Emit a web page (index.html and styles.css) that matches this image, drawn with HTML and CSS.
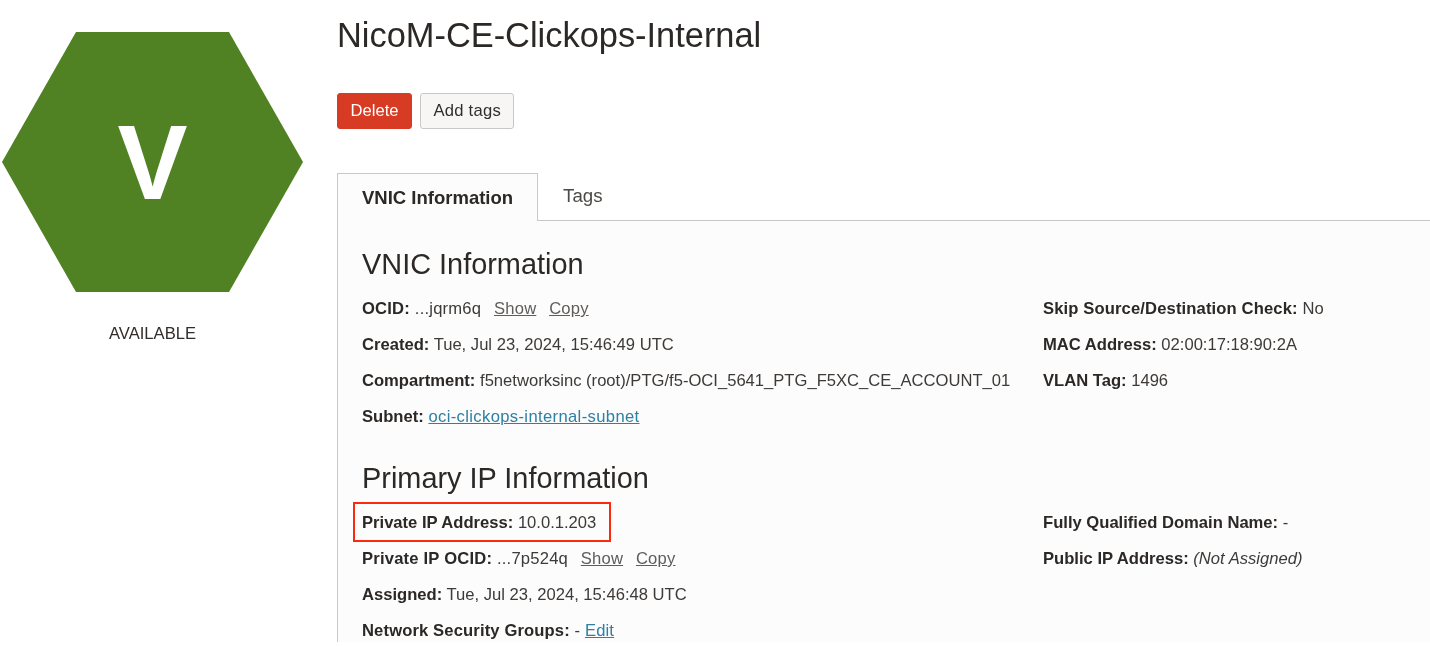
FILE: index.html
```html
<!DOCTYPE html>
<html lang="en">
<head>
<meta charset="utf-8">
<title>NicoM-CE-Clickops-Internal</title>
<link rel="stylesheet" href="styles.css">
</head>
<body>
<div class="page">
  <aside class="status">
    <div class="hex">
      <svg class="hex-shape" width="301" height="260" viewBox="0 0 301 260"><polygon points="0,130 74,0 227,0 301,130 227,260 74,260" fill="#508123"/></svg>
      <span class="hex-letter">V</span>
    </div>
    <div class="status-label">AVAILABLE</div>
  </aside>
  <main class="content">
    <h1 class="title">NicoM-CE-Clickops-Internal</h1>
    <div class="actions">
      <button class="btn btn-danger">Delete</button>
      <button class="btn btn-default">Add tags</button>
    </div>
    <nav class="tabs">
      <div class="tab tab-active">VNIC Information</div>
      <div class="tab tab-plain">Tags</div>
      <div class="tab-rest"></div>
    </nav>
    <section class="panel">
      <h2 class="heading">VNIC Information</h2>
      <div class="cols">
        <div class="col-left">
          <div class="row row-wide"><b>OCID:</b> ...jqrm6q <a class="action">Show</a> <a class="action">Copy</a></div>
          <div class="row"><b>Created:</b> Tue, Jul 23, 2024, 15:46:49 UTC</div>
          <div class="row"><b>Compartment:</b> f5networksinc (root)/PTG/f5-OCI_5641_PTG_F5XC_CE_ACCOUNT_01</div>
          <div class="row"><b>Subnet:</b> <a class="link link-long">oci-clickops-internal-subnet</a></div>
        </div>
        <div class="col-right">
          <div class="row row-loose"><b>Skip Source/Destination Check:</b> No</div>
          <div class="row"><b>MAC Address:</b> 02:00:17:18:90:2A</div>
          <div class="row"><b>VLAN Tag:</b> 1496</div>
        </div>
      </div>
      <h2 class="heading heading-second">Primary IP Information</h2>
      <div class="cols">
        <div class="col-left">
          <div class="row"><span class="mark"><b>Private IP Address:</b> 10.0.1.203</span></div>
          <div class="row row-wide"><b>Private IP OCID:</b> ...7p524q <a class="action">Show</a> <a class="action">Copy</a></div>
          <div class="row"><b>Assigned:</b> Tue, Jul 23, 2024, 15:46:48 UTC</div>
          <div class="row row-loose"><b>Network Security Groups:</b> - <a class="link">Edit</a></div>
        </div>
        <div class="col-right">
          <div class="row"><b>Fully Qualified Domain Name:</b> -</div>
          <div class="row"><b>Public IP Address:</b> <i>(Not Assigned)</i></div>
        </div>
      </div>
    </section>
  </main>
</div>
</body>
</html>
```
FILE: styles.css
```css
* { box-sizing: border-box; }
html, body { margin: 0; height: 100%; background: #fff; overflow: hidden; }
body { font-family: "Liberation Sans", Arial, sans-serif; color: #312d2a; font-size: 16.6px; }
.page { display: flex; height: 647px; filter: blur(0.4px); }
.status { width: 337px; flex: none; padding: 32px 0 0 2px; }
.hex { position: relative; width: 301px; height: 260px; }
.hex-shape { display: block; }
.hex-letter {
  position: absolute; inset: 0; display: flex; align-items: center; justify-content: center;
  color: #fff; font-weight: 700; font-size: 105px; line-height: 1;
}
.status-label { width: 301px; margin-top: 32px; text-align: center; font-size: 16.6px; line-height: 20px; color: #312d2a; }
.content { flex: 1; min-width: 0; }
.title { margin: 16px 0 0; font-weight: 400; font-size: 34.4px; line-height: 38px; color: #2b2826; }
.actions { display: flex; gap: 8px; margin-top: 39px; }
.btn {
  height: 36px; padding: 0 12.5px; font: 16.6px/20px "Liberation Sans", Arial, sans-serif; color: #312d2a;
  background: #f7f6f5; border: 1px solid #c9c8c6; border-radius: 3px;
}
.btn-danger { background: #d73b24; border-color: #d73b24; color: #fff; }
.btn-default { letter-spacing: 0.25px; }
.tabs { display: flex; margin-top: 44px; height: 48px; }
.tab { padding: 0 24px; font-size: 18.7px; color: #4c4946; }
.tab-active { background: #fcfcfc; color: #2b2826; border: 1px solid #c9c8c6; border-bottom: 0; font-weight: 700; font-size: 18.5px; line-height: 48px; }
.tab-plain { padding-left: 25px; line-height: 46px; border-bottom: 1px solid #c9c8c6; }
.tab-rest { flex: 1; border-bottom: 1px solid #c9c8c6; }
.panel { background: #fcfcfc; padding: 0 24px; border-left: 1px solid #c9c8c6; height: 421px; overflow: hidden; }
.heading { margin: 0; padding-top: 25px; font-weight: 400; font-size: 28.9px; line-height: 36px; color: #2b2826; }
.cols { display: flex; margin-top: 9px; }
.col-left { width: 681px; flex: none; }
.col-right { flex: 1; }
.row { line-height: 36px; height: 36px; white-space: nowrap; color: #3d3a37; }
.row b { color: #2b2826; }
.row-wide { letter-spacing: 0.2px; }
.row-loose { letter-spacing: 0.13px; }
.action { color: #5f5c59; text-decoration: underline; margin-left: 8px; }
.link { color: #2d7fa3; text-decoration: underline; }
.link-long { letter-spacing: 0.36px; }
.mark { position: relative; }
.mark::after {
  content: ""; position: absolute; left: -9px; right: -15px; top: -11px; bottom: -10px;
  border: 2px solid #fa2a0e;
}
```
